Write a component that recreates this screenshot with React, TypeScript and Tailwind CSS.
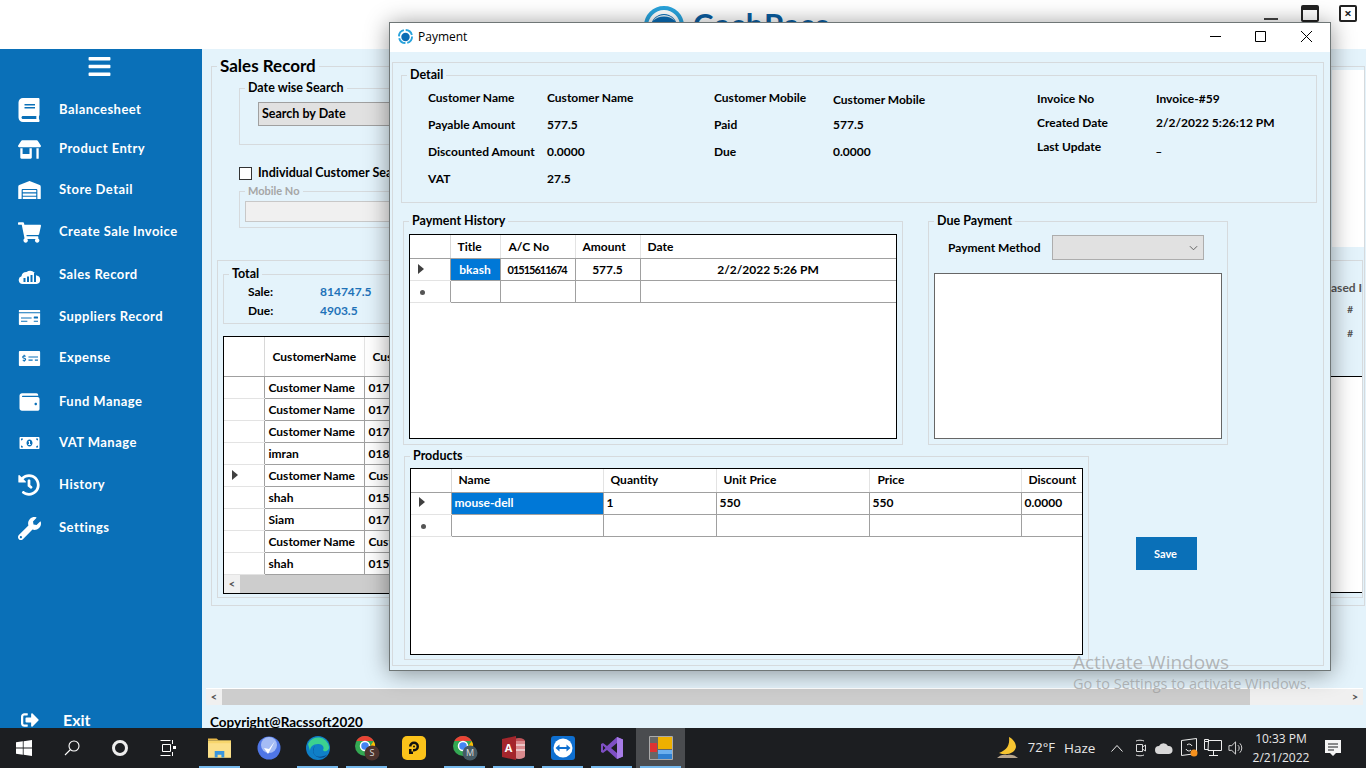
import React from 'react';
import {
  FaBook, FaStoreAlt, FaWarehouse, FaShoppingCart, FaMoneyCheck, FaMoneyCheckAlt,
  FaWallet, FaMoneyBillAlt, FaHistory, FaWrench, FaBars, FaSignOutAlt,
} from 'react-icons/fa';

const ui = "font-['Lato','Liberation_Sans',sans-serif] font-bold text-black";
const sys = "font-['Open_Sans','Liberation_Sans',sans-serif]";

const CloudChart = ({ className }: { className?: string }) => (
  <svg viewBox="0 0 22 17" className={className}>
    <path fill="#fff" d="M4 17a4 4 0 0 1-1-7.8A5 5 0 0 1 8 5a6.500 6.500 0 0 1 10 3.500A4.300 4.300 0 0 1 18 17z" />
    <path fill="#0a70b8" d="M5 11h2v4H5zM8.500 9.500h2V15h-2zM12 8h2v7h-2zM15.500 6h2v9h-2z" />
  </svg>
);

const navItems = [
  { label: 'Balancesheet', gap: 'mt-[15px]', icon: <FaBook className="w-[22px] h-[24px]" /> },
  { label: 'Product Entry', gap: 'mt-[7px]', icon: <FaStoreAlt className="w-[23px] h-[19px]" /> },
  { label: 'Store Detail', gap: 'mt-[9px]', icon: <FaWarehouse className="w-[23px] h-[18px]" /> },
  { label: 'Create Sale Invoice', gap: 'mt-[10px]', icon: <FaShoppingCart className="w-[23px] h-[21px]" /> },
  { label: 'Sales Record', gap: 'mt-[11px]', icon: <CloudChart className="w-[23px] h-[17px]" /> },
  { label: 'Suppliers Record', gap: 'mt-[10px]', icon: <FaMoneyCheck className="w-[23px] h-[17px]" /> },
  { label: 'Expense', gap: 'mt-[9px]', icon: <FaMoneyCheckAlt className="w-[23px] h-[17px]" /> },
  { label: 'Fund Manage', gap: 'mt-[12px]', icon: <FaWallet className="w-[23px] h-[20px]" /> },
  { label: 'VAT Manage', gap: 'mt-[9px]', icon: <FaMoneyBillAlt className="w-[23px] h-[16px]" /> },
  { label: 'History', gap: 'mt-[10px]', icon: <FaHistory className="w-[22px] h-[22px]" /> },
  { label: 'Settings', gap: 'mt-[11px]', icon: <FaWrench className="w-[23px] h-[23px]" /> },
];

const Sidebar = () => (
  <aside className={`${ui} w-[202px] shrink-0 bg-[#0a70b8] flex flex-col text-white`}>
    <FaBars className="mt-[5px] ml-[88px] w-[23px] h-[25px] text-white" />
    {navItems.map((item) => (
      <div key={item.label} className={`${item.gap} h-8 flex items-center`}>
        <span className="ml-[18px] w-[41px] flex text-white">{item.icon}</span>
        <span className="text-[13px] text-white tracking-[0.45px]">{item.label}</span>
      </div>
    ))}
    <div className="mt-auto h-4 flex items-center text-white">
      <FaSignOutAlt className="ml-[19px] w-[22px] h-[18px]" />
      <span className="ml-[22px] text-[16px] leading-4">Exit</span>
    </div>
  </aside>
);

const GroupBox = ({ title, className, legendClass, children }: {
  title: string; className: string; legendClass?: string; children?: React.ReactNode;
}) => (
  <fieldset className={`${className} min-w-0 border border-[#d6dadd] p-0 shrink-0`}>
    <legend className={`${legendClass ?? 'text-[12.500px] leading-4'} ml-[5px] px-[3px] whitespace-nowrap`}>{title}</legend>
    {children}
  </fieldset>
);

interface Column { label: string; width: string; head: string; cell?: string }

const Arrow = () => <span className="inline-block border-y-[5px] border-l-[6px] border-y-transparent border-l-[#404040]" />;
const Star = () => <span className="inline-block w-[5px] h-[5px] rounded-full bg-[#555]" />;

// WinForms style grid: fixed columns, grey row lines, blue selected cell
const DataGrid = ({ columns, rows, frame, tableWidth, headHeight = 'h-[23px]', textPad = '', current = 0, newRow = true, selected = true }: {
  columns: Column[]; rows: string[][]; frame: string; tableWidth: string; headHeight?: string; textPad?: string; current?: number; newRow?: boolean; selected?: boolean;
}) => (
  <div className={`${frame} border border-black bg-white overflow-hidden shrink-0`}>
    <table className={`${tableWidth} table-fixed border-collapse text-[12px] leading-4`}>
      <thead>
        <tr className={headHeight}>
          <th className="w-[40px] border-r border-b border-r-[#d8d8d8] border-b-[#a0a0a0]" />
          {columns.map((c) => (
            <th key={c.label} className={`${c.width} ${c.head} ${textPad} p-0 text-left font-bold whitespace-nowrap overflow-hidden border-r border-b border-r-[#e3e3e3] border-b-[#a0a0a0]`}>{c.label}</th>
          ))}
        </tr>
      </thead>
      <tbody>
        {rows.map((row, r) => (
          <tr key={r} className="h-[22px]">
            <td className={`${textPad} p-0 pl-[8px] border-r border-b border-r-[#a0a0a0] border-b-[#e3e3e3]`}>{r === current && <Arrow />}</td>
            {row.map((v, i) => (
              <td key={i} className={`${columns[i].cell ?? 'pl-[3px]'} ${textPad} p-0 whitespace-nowrap overflow-hidden border-r border-b border-[#a0a0a0] ${selected && r === 0 && i === 0 ? 'bg-[#0078d7] text-white' : ''}`}>{v}</td>
            ))}
          </tr>
        ))}
        {newRow && (
          <tr className="h-[22px]">
            <td className="p-0 pl-[10px] border-r border-b border-r-[#a0a0a0] border-b-[#e3e3e3]"><Star /></td>
            {columns.map((c) => <td key={c.label} className="p-0 border-r border-b border-[#a0a0a0]" />)}
          </tr>
        )}
      </tbody>
    </table>
  </div>
);

const salesRows = [
  ['Customer Name', '0176'], ['Customer Name', '0176'], ['Customer Name', '0176'],
  ['imran', '0186'], ['Customer Name', 'Cust'], ['shah', '0151'],
  ['Siam', '0176'], ['Customer Name', 'Cust'], ['shah', '0151'],
];

const SalesRecord = () => (
  <section className={`${ui} flex-1 min-w-0 bg-[#e4f3fb] flex flex-col overflow-hidden`}>
    <GroupBox title="Sales Record" legendClass="text-[17px] leading-5" className="mt-[7px] ml-[9px] w-[1154px] h-[550px]">
      <div className="h-[184px] flex justify-between">
        <div className="pl-[27px]">
          <GroupBox title="Date wise Search" className="mt-[4px] w-[500px] h-[65px]">
            <div className="mt-[6px] ml-[18px] h-6 w-[300px] bg-[#e1e1e1] border border-[#a0a0a0] pl-[3px] text-[12.500px] leading-[22px]">Search by Date</div>
          </GroupBox>
          <div className="mt-[22px] h-[13px] flex items-center gap-[6px] text-[12.500px] whitespace-nowrap">
            <span className="w-[13px] h-[13px] bg-white border border-[#333]" />
            Individual Customer Search
          </div>
          <GroupBox title="Mobile No" legendClass="text-[11px] leading-4 text-[#a6a6a6]" className="mt-[3px] w-[300px] h-[45px]">
            <div className="mt-[2px] ml-[5px] h-[21px] w-[280px] bg-[#f0f0f0] border border-[#c8c8c8]" />
          </GroupBox>
        </div>
        <div className="-mt-[6px] w-8 h-[177px] bg-white" />
      </div>
      <div className="ml-[5px] w-[1146px] h-[338px] border border-[#d6dadd] flex">
        <div className="flex-1 min-w-0">
          <GroupBox title="Total" className="mt-[5px] ml-[5px] w-[600px] h-[58px]">
            <div className="pl-[24px] text-[12px] leading-[19px]">
              <div className="flex"><span className="w-[72px]">Sale:</span><span className="text-[#1e72b8]">814747.5</span></div>
              <div className="flex"><span className="w-[72px]">Due:</span><span className="text-[#1e72b8]">4903.5</span></div>
            </div>
          </GroupBox>
          <div className="mt-[12px] ml-[5px] w-[700px] h-[258px] border border-black bg-white flex flex-col overflow-hidden">
            <DataGrid
              frame="h-[238px] !border-0"
              tableWidth="w-[260px]"
              headHeight="h-[39px]"
              textPad="pt-[2px]"
              current={4}
              newRow={false}
              selected={false}
              rows={salesRows}
              columns={[
                { label: 'CustomerName', width: 'w-[100px]', head: 'pl-[8px]', cell: 'pl-[4px]' },
                { label: 'Cust', width: 'w-[120px]', head: 'pl-[8px]', cell: 'pl-[4px]' },
              ]}
            />
            <div className="h-[18px] flex bg-[#f0f0f0]">
              <span className="w-[16px] text-center text-[11px] leading-[18px] text-[#555]">&lt;</span>
              <span className="flex-1 bg-[#cdcdcd]" />
            </div>
          </div>
        </div>
        <div className="w-[133px] shrink-0 whitespace-nowrap overflow-hidden">
          <div className="mt-[19px] pl-[71px] h-4 text-[12px] leading-4 text-[#555]">Purchased Item</div>
          <div className="mt-[5px] h-4 pr-[9px] text-right text-[10px] leading-4 text-[#555]">#</div>
          <div className="mt-2 h-4 pr-[9px] text-right text-[10px] leading-4 text-[#555]">#</div>
          <div className="mt-[35px] h-[217px] bg-white border-y border-black" />
        </div>
      </div>
    </GroupBox>
    <div className="mt-[82px] ml-1 w-[1157px] h-[17px] shrink-0 flex bg-[#f0f0f0] border-t border-white text-[#555]">
      <span className="w-4 text-center text-[11px] leading-4">&lt;</span>
      <span className="w-[1028px] bg-[#cdcdcd]" />
      <span className="ml-auto w-4 text-center text-[11px] leading-4">&gt;</span>
    </div>
    <div className="mt-[10px] ml-2 text-[13.500px] leading-[14px] whitespace-nowrap">Copyright@Racssoft2020</div>
  </section>
);

const Logo = () => (
  <svg viewBox="0 0 40 40" className="w-10 h-10 shrink-0">
    <circle cx="20" cy="20" r="18" fill="none" stroke="#29a3dc" strokeWidth="4" />
    <circle cx="20" cy="21" r="13" fill="#0a6cb5" />
    <path d="M9 15a13 13 0 0 1 22 0a16 16 0 0 0-22 0z" fill="#e8f5fc" />
  </svg>
);

const Header = () => (
  <header className="h-[49px] shrink-0 bg-white flex items-start overflow-hidden">
    <div className="ml-[644px] mt-[6px] flex gap-[9px]">
      <Logo />
      <span className="font-['Lato','Liberation_Sans',sans-serif] font-bold text-[31px] leading-[36px] text-[#0a5c9e] tracking-[1px]">CashPass</span>
    </div>
    <div className="ml-auto flex items-start text-[#222]">
      <span className="mt-[18px] w-[14px] h-[2px] bg-[#444]" />
      <span className="mt-[5px] ml-[23px] w-[18px] h-[17px] rounded-[2px] border-2 border-t-[5px] border-[#222]" />
      <span className="mt-[5px] ml-[20px] mr-[9px] w-[18px] h-[17px] rounded-[2px] border-2 border-[#222] flex items-center justify-center text-[13px] leading-none font-bold">×</span>
    </div>
  </header>
);

const DetailColumn = ({ rows, rowHeight, labelWidth, valueWidth, className }: {
  rows: string[][]; rowHeight: string; labelWidth: string; valueWidth: string; className?: string;
}) => (
  <div className={`${className ?? ''} shrink-0`}>
    {rows.map(([label, value, nudge]) => (
      <div key={label} className={`${rowHeight} flex items-center`}>
        <span className={`${labelWidth} whitespace-nowrap`}>{label}</span>
        <span className={`${valueWidth} ${nudge ?? ''} whitespace-nowrap`}>{value}</span>
      </div>
    ))}
  </div>
);

const PaymentDialog = () => (
  <div className="absolute left-[389px] top-[22px] w-[942px] h-[649px] border border-[#6f7676] bg-[#e4f3fb] shadow-[0_2px_22px_rgba(0,0,0,0.42)]">
    <div className={`${sys} h-[29px] pb-[2px] bg-white flex items-center text-[12px] text-black`}>
      <svg viewBox="0 0 16 16" className="ml-[8px] w-[15px] h-[15px]">
        <circle cx="8" cy="8" r="7" fill="none" stroke="#29a3dc" strokeWidth="2" strokeDasharray="9 2" />
        <circle cx="8" cy="8.500" r="4.500" fill="#0a6cb5" />
      </svg>
      <span className="ml-[5px]">Payment</span>
      <svg viewBox="0 0 102 12" className="ml-auto mr-[18px] -mt-[2px] w-[102px] h-3 text-black" fill="none" stroke="currentColor">
        <path d="M0 6.500h11M45.500 1.500h10v10h-10zM91 1l11 11M102 1l-11 11" />
      </svg>
    </div>
    <div className={`${ui} pl-[2px] pt-[10px]`}>
      <div className="w-[932px] h-[604px] border border-[#d6dadd] text-[12px] leading-4">
        <GroupBox title="Detail" className="mt-1 ml-2 w-[916px] h-[136px]">
          <div className="pt-[1px] pl-[26px] flex">
            <DetailColumn labelWidth="w-[119px]" valueWidth="w-[167px]" rowHeight="h-[27px]" rows={[
              ['Customer Name', 'Customer Name'], ['Payable Amount', '577.5'], ['Discounted Amount', '0.0000'], ['VAT', '27.5'],
            ]} />
            <DetailColumn labelWidth="w-[119px]" valueWidth="w-[204px]" rowHeight="h-[27px]" rows={[
              ['Customer Mobile', 'Customer Mobile', 'pt-[4px]'], ['Paid', '577.5'], ['Due', '0.0000'],
            ]} />
            <DetailColumn className="pt-[3px]" labelWidth="w-[119px]" valueWidth="w-[140px]" rowHeight="h-[24px]" rows={[
              ['Invoice No', 'Invoice-#59'], ['Created Date', '2/2/2022 5:26:12 PM'], ['Last Update', '_'],
            ]} />
          </div>
        </GroupBox>
        <div className="mt-[10px] ml-[10px] flex">
          <GroupBox title="Payment History" className="w-[500px] h-[232px]">
            <DataGrid
              frame="mt-[5px] ml-[5px] w-[488px] h-[205px]"
              tableWidth="w-[486px]"
              textPad="pt-[2px]"
              rows={[['bkash', '01515611674', '577.5', '2/2/2022 5:26 PM']]}
              columns={[
                { label: 'Title', width: 'w-[50px]', head: 'pl-[7px]', cell: 'text-center' },
                { label: 'A/C No', width: 'w-[75px]', head: 'pl-[8px]', cell: 'pl-[7px] text-[11px] tracking-[-1px]' },
                { label: 'Amount', width: 'w-[65px]', head: 'pl-[7px]', cell: 'text-center' },
                { label: 'Date', width: 'w-[256px]', head: 'pl-[7px]', cell: 'text-center' },
              ]}
            />
          </GroupBox>
          <GroupBox title="Due Payment" className="ml-[25px] w-[300px] h-[232px]">
            <div className="mt-[6px] pl-[19px] flex items-center">
              <span className="w-[104px] whitespace-nowrap">Payment Method</span>
              <div className="w-[152px] h-[25px] bg-[#e1e1e1] border border-[#adadad] flex items-center justify-end pr-[5px]">
                <svg viewBox="0 0 10 6" className="w-[9px] h-[6px]" fill="none" stroke="#555"><path d="M1 1l4 4 4-4" /></svg>
              </div>
            </div>
            <div className="mt-[13px] ml-[5px] w-[288px] h-[166px] bg-white border border-[#666]" />
          </GroupBox>
        </div>
        <div className="mt-[3px] ml-[11px] flex items-start">
          <GroupBox title="Products" className="w-[685px] h-[212px]">
            <DataGrid
              frame="mt-[4px] ml-[5px] w-[673px] h-[187px]"
              tableWidth="w-[671px]"
              rows={[['mouse-dell', '1', '550', '550', '0.0000']]}
              columns={[
                { label: 'Name', width: 'w-[152px]', head: 'pl-[7px]' },
                { label: 'Quantity', width: 'w-[113px]', head: 'pl-[7px]' },
                { label: 'Unit Price', width: 'w-[153px]', head: 'pl-[7px]' },
                { label: 'Price', width: 'w-[152px]', head: 'pl-[8px]' },
                { label: 'Discount', width: 'w-[61px]', head: 'pl-[7px]' },
              ]}
            />
          </GroupBox>
          <button className="mt-[89px] ml-[47px] w-[61px] h-[33px] pr-[2px] bg-[#0a70b8] text-white text-[11px]">Save</button>
        </div>
      </div>
    </div>
  </div>
);

const ChromeIcon = ({ letter, badge }: { letter: string; badge: string }) => (
  <svg viewBox="0 0 26 26" className="w-[26px] h-[26px]">
    <circle cx="11" cy="11" r="10" fill="#34a853" />
    <path d="M2.300 6A10 10 0 0 1 19.700 6H11z" fill="#ea4335" />
    <path d="M19.700 6A10 10 0 0 1 11 21l4-8z" fill="#fbbc05" />
    <circle cx="11" cy="11" r="4.500" fill="#4285f4" stroke="#fff" strokeWidth="1.500" />
    <circle cx="18" cy="18" r="7.500" fill={badge} />
    <text x="18" y="21" textAnchor="middle" fontSize="9" fill="#ddd" fontFamily="Open Sans">{letter}</text>
  </svg>
);

const taskIcons = [
  { key: 'explorer', open: true, el: (
    <svg viewBox="0 0 24 20" className="w-[23px] h-[20px]">
      <path d="M0 0h9l2 2H0z" fill="#e9b949" /><path d="M0 2h24v18H0z" fill="#f7d66c" />
      <path d="M0 5h24v15H0z" fill="#fbe08a" /><path d="M7 13h10v7h-3v-3h-4v3H7z" fill="#3a96dd" />
    </svg>) },
  { key: 'check', open: false, el: (
    <svg viewBox="0 0 24 24" className="w-6 h-6">
      <circle cx="12" cy="12" r="11.500" fill="#4f76e6" /><circle cx="12" cy="9" r="8" fill="#a5bcf5" />
      <path d="M7 12l4 6 7-13-6 8z" fill="#fff" />
    </svg>) },
  { key: 'edge', open: true, el: (
    <svg viewBox="0 0 24 24" className="w-6 h-6">
      <circle cx="12" cy="12" r="12" fill="#0f7fc8" />
      <path d="M2 8a11 11 0 0 1 21 3c.5 4-5 5.500-6 3 2-3-1-6.500-5-6C7 8 4 11 4 15z" fill="#3cd18f" />
      <path d="M10 20a7 7 0 0 1-1-10c-3 2-3 10 4 11.500 4 1 7-1 8-3-3 2-8 3-11 1.500z" fill="#0b4a8f" />
    </svg>) },
  { key: 'chrome-s', open: true, el: <ChromeIcon letter="S" badge="#4e342e" /> },
  { key: 'ld', open: false, el: (
    <svg viewBox="0 0 24 24" className="w-6 h-6 -ml-1">
      <rect width="24" height="24" rx="5" fill="#fbc31a" />
      <path d="M7 18v-5h2.500v2.500H12a5 5 0 1 0-5-5H9.500A2.500 2.500 0 1 1 12 13h-1v5z" fill="#111" /><circle cx="12" cy="10.500" r="1" fill="#111" />
    </svg>) },
  { key: 'chrome-m', open: true, el: <ChromeIcon letter="M" badge="#455a64" /> },
  { key: 'access', open: true, el: (
    <svg viewBox="0 0 24 24" className="w-6 h-6">
      <ellipse cx="17" cy="5" rx="6" ry="3" fill="#c0555a" /><path d="M11 5h12v15a6 3 0 0 1-12 0z" fill="#d98a8d" />
      <path d="M11 9h12M11 14h12" stroke="#fff" /><path d="M0 3l14-3v24L0 21z" fill="#a4262c" />
      <text x="6.500" y="16" textAnchor="middle" fontSize="11" fontWeight="700" fill="#fff" fontFamily="Open Sans">A</text>
    </svg>) },
  { key: 'teamviewer', open: true, el: (
    <svg viewBox="0 0 24 24" className="w-6 h-6">
      <rect width="24" height="24" rx="3" fill="#0e6fd0" /><circle cx="12" cy="12" r="9.500" fill="#fff" />
      <path d="M4.500 12l4-3.500V11h7V8.500l4 3.500-4 3.500V13h-7v2.500z" fill="#0e6fd0" />
    </svg>) },
  { key: 'vs', open: true, el: (
    <svg viewBox="0 0 24 24" className="w-6 h-6">
      <path d="M17 1l6 2.500v17L17 23 7 14l-4 3-2-1V8l2-1 4 3z" fill="#7e4fc4" />
      <path d="M17 7l-6 5 6 5zM3 9.500v5L5.500 12z" fill="#1d1f22" /><path d="M17 1l6 2.500v17L17 23z" fill="#a77ce6" />
    </svg>) },
  { key: 'app', open: true, active: true, el: (
    <svg viewBox="0 0 24 24" className="w-6 h-6">
      <path d="M.5 .5h23v23H.5z" fill="#666" stroke="#aaa" />
      <path d="M9 1h14v12H9z" fill="#eeb000" /><path d="M9 14h14v4H9z" fill="#6cb0ef" /><path d="M9 18h14v5H9z" fill="#2f7fd0" />
      <path d="M1 7h7v9H1z" fill="#d33" />
    </svg>) },
];

const Taskbar = () => (
  <footer className={`${sys} h-10 shrink-0 bg-[#1c1e21] flex items-center text-[#e8e8e8]`}>
    <div className="w-12 flex justify-center">
      <svg viewBox="0 0 16 16" className="w-4 h-4" fill="#fff">
        <path d="M0 2.300L6.800 1.300V7.600H0zM7.600 1.200L16 0V7.600H7.600zM0 8.400H6.800V14.700L0 13.700zM7.600 8.400H16V16L7.600 14.800z" />
      </svg>
    </div>
    <div className="w-12 flex justify-center">
      <svg viewBox="0 0 16 16" className="w-4 h-4" fill="none" stroke="#fff" strokeWidth="1.100">
        <circle cx="10" cy="6" r="5" /><path d="M6.500 9.500L1 15" />
      </svg>
    </div>
    <div className="w-12 flex justify-center"><span className="w-4 h-4 rounded-full border-[3px] border-[#ededed]" /></div>
    <div className="w-12 flex justify-center">
      <svg viewBox="0 0 16 16" className="w-4 h-4" fill="none" stroke="#fff">
        <path d="M.5 .5h10M.5 15.500h10M2.500 4.500h8v7h-8zM12.500 0v4M12.500 12v4" /><path d="M13 6h3v3h-3z" fill="#fff" stroke="none" />
      </svg>
    </div>
    <div className="ml-[3px] h-full flex">
      {taskIcons.map((t) => (
        <div key={t.key} className={`w-[49px] h-full relative flex items-center justify-center ${t.active ? 'bg-[#4a4c4f]' : ''}`}>
          {t.el}
          {t.open && <span className="absolute bottom-0 inset-x-1 h-[2px] bg-[#76b9ed]" />}
        </div>
      ))}
    </div>
    <div className="ml-auto flex items-center h-full">
      <svg viewBox="0 0 22 24" className="w-[22px] h-6">
        <path d="M12 1c1 8-2 13-10 16 8 3 16 0 17-6 0-4-3-8-7-10z" fill="#f7c531" />
        <path d="M0 22c3-3 6-4 10-3 4-1 8 0 11 3z" fill="#b8a58d" />
      </svg>
      <span className="ml-[9px] text-[13px]">72°F</span>
      <span className="ml-[9px] w-[30px] text-[13.500px]">Haze</span>
      <svg viewBox="0 0 12 7" className="ml-[17px] w-3 h-[7px]" fill="none" stroke="#eee"><path d="M.5 6.500l5.500-6 5.500 6" /></svg>
      <svg viewBox="0 0 12 20" className="ml-[12px] w-3 h-5" fill="none" stroke="#ddd">
        <path d="M1 3a5 2 0 0 1 8 0M1 17a5 2 0 0 0 8 0M1.500 6.500h6v7h-6zM7.500 9l3-2v6l-3-2" />
      </svg>
      <svg viewBox="0 0 18 12" className="ml-[8px] w-[18px] h-3"><path d="M4 12a4 4 0 0 1 0-8 5 5 0 0 1 9 0 4 4 0 0 1 1 8z" fill="#d8d8d8" /></svg>
      <svg viewBox="0 0 18 20" className="ml-[7px] w-[18px] h-5" fill="none" stroke="#eee">
        <path d="M1.500 2.500l15-2v15l-15 2zM7 7a3 3 0 0 1 5 1M11 12a3 3 0 0 1-5-1" /><circle cx="14" cy="15" r="3.500" fill="#f7921e" stroke="none" />
      </svg>
      <svg viewBox="0 0 18 18" className="ml-[6px] w-[18px] h-[18px]" fill="none" stroke="#eee">
        <path d="M.5 .5h4v2h-4zM4.500 1.500h13v10H4zM.5 2.500v8h4M9.500 11.500v5M5 16.500h9" />
      </svg>
      <svg viewBox="0 0 18 16" className="ml-[6px] w-[17px] h-4" fill="none" stroke="#ddd">
        <path d="M1 5.500h3l4-4v13l-4-4H1zM10.500 5a4 4 0 0 1 0 6M12.500 3a7 7 0 0 1 0 10" />
      </svg>
      <div className="ml-[1px] w-[70px] text-center text-[12px] leading-[19px]">
        <div>10:33 PM</div>
        <div>2/21/2022</div>
      </div>
      <svg viewBox="0 0 16 16" className="ml-[9px] mr-[25px] w-4 h-4">
        <path d="M0 0h16v13h-5l-3 3-3-3H0z" fill="#f4f4f4" /><path d="M3 4h10M3 7h10M3 10h6" stroke="#1c1e21" />
      </svg>
    </div>
  </footer>
);

export default function App() {
  return (
    <div className="relative w-[1366px] h-[768px] overflow-hidden bg-white flex flex-col">
      <Header />
      <main className="flex-1 min-h-0 flex">
        <Sidebar />
        <SalesRecord />
      </main>
      <Taskbar />
      <PaymentDialog />
      <div className={`${sys} absolute left-[1073px] top-[650px] text-[#9a9a9a]/70 pointer-events-none`}>
        <div className="text-[19px] leading-6">Activate Windows</div>
        <div className="text-[14.500px] leading-5">Go to Settings to activate Windows.</div>
      </div>
    </div>
  );
}
